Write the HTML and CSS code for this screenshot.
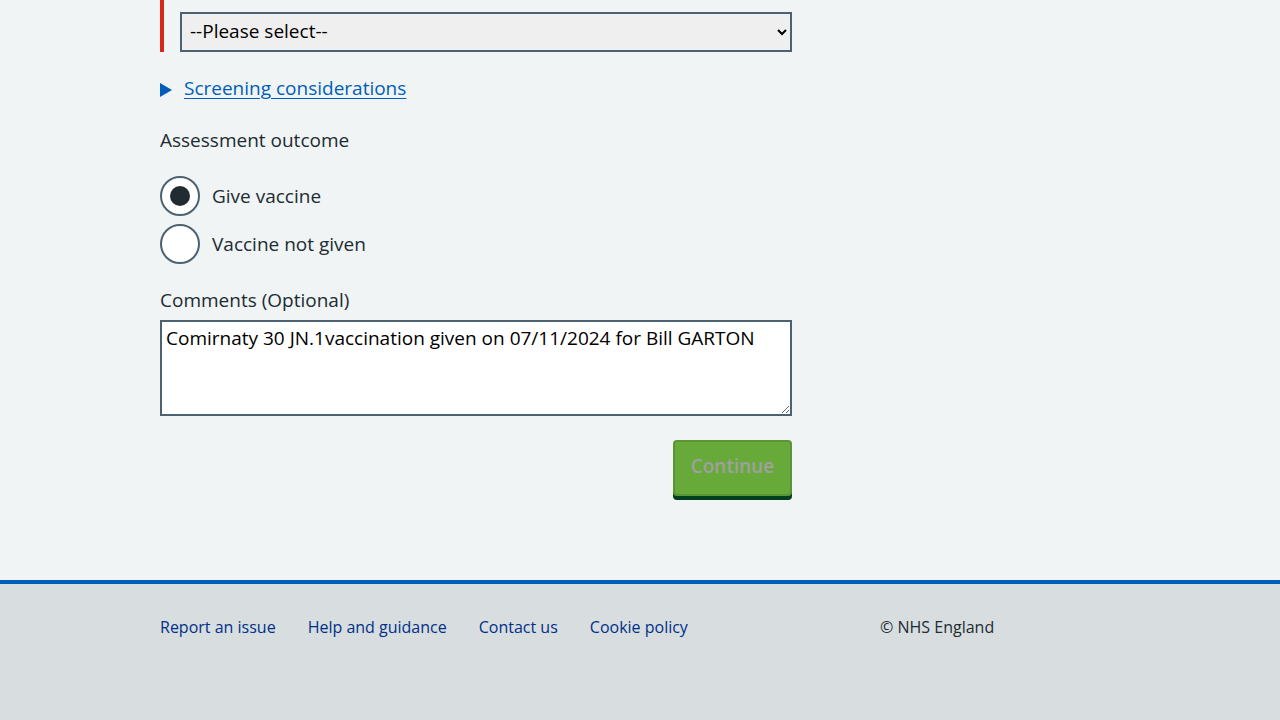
FILE: index.html
```html
<!DOCTYPE html>
<html lang="en">
<head>
<meta charset="utf-8">
<title>Assessment</title>
<link rel="stylesheet" href="styles.css">
</head>
<body>
<main class="main">
  <div class="container">
    <div class="error-group">
      <select class="select">
        <option>--Please select--</option>
      </select>
    </div>

    <div class="details">
      <span class="details-arrow"></span>
      <a href="#" class="details-link">Screening considerations</a>
    </div>

    <fieldset class="fieldset">
      <legend class="legend">Assessment outcome</legend>
      <div class="radios">
        <label class="radio">
          <span class="radio-circle checked"></span>
          <span class="radio-label">Give vaccine</span>
        </label>
        <label class="radio">
          <span class="radio-circle"></span>
          <span class="radio-label">Vaccine not given</span>
        </label>
      </div>
    </fieldset>

    <div class="form-group">
      <label class="label">Comments (Optional)</label>
      <textarea class="textarea">Comirnaty 30 JN.1vaccination given on 07/11/2024 for Bill GARTON</textarea>
    </div>

    <div class="actions">
      <button class="button" type="button">Continue</button>
    </div>
  </div>
</main>
<footer class="footer">
  <div class="footer-inner">
    <ul class="footer-list">
      <li><a href="#" class="footer-link">Report an issue</a></li>
      <li><a href="#" class="footer-link">Help and guidance</a></li>
      <li><a href="#" class="footer-link">Contact us</a></li>
      <li><a href="#" class="footer-link">Cookie policy</a></li>
    </ul>
    <p class="copyright">© NHS England</p>
  </div>
</footer>
</body>
</html>
```
FILE: styles.css
```css
* { box-sizing: border-box; }
html, body {
  margin: 0;
  padding: 0;
  background: #f0f4f5;
  font-family: "Open Sans", "Noto Sans", sans-serif;
  color: #212b32;
}
.main {
  height: 580px;
}
.container {
  width: 632px;
  margin-left: 160px;
}
.error-group {
  border-left: 4px solid #d5281b;
  padding-left: 16px;
  padding-top: 12px;
  height: 52px;
}
.select {
  display: block;
  width: 612px;
  height: 40px;
  border: 2px solid #4c6272;
  background: #efefef;
  font-family: inherit;
  font-size: 19px;
  line-height: 24px;
  color: #000;
  padding: 0 4px 3px;
  margin: 0;
  border-radius: 0;
}
.details {
  display: flex;
  align-items: center;
  margin-top: 24px;
  height: 24px;
}
.details-arrow {
  width: 0;
  height: 0;
  border-left: 12px solid #005eb8;
  border-top: 7px solid transparent;
  border-bottom: 7px solid transparent;
  margin-right: 12px;
  margin-top: 4px;
}
.details-link {
  color: #005eb8;
  font-size: 19px;
  text-decoration: underline;
  text-underline-offset: 3px;
}
.fieldset {
  border: 0;
  margin: 28px 0 0;
  padding: 0;
}
.legend {
  padding: 0;
  font-size: 19px;
  line-height: 24px;
  margin-bottom: 24px;
}
.radios {
  display: flex;
  flex-direction: column;
  gap: 8px;
}
.radio {
  display: flex;
  align-items: center;
  height: 40px;
}
.radio-circle {
  width: 40px;
  height: 40px;
  border: 2px solid #4c6272;
  border-radius: 50%;
  background: #fff;
  display: flex;
  align-items: center;
  justify-content: center;
  flex-shrink: 0;
}
.radio-circle.checked::after {
  content: "";
  width: 20px;
  height: 20px;
  border-radius: 50%;
  background: #212b32;
}
.radio-label {
  font-size: 19px;
  margin-left: 12px;
}
.form-group {
  margin-top: 24px;
}
.label {
  display: block;
  font-size: 19px;
  line-height: 24px;
  margin-bottom: 8px;
}
.textarea {
  display: block;
  width: 632px;
  height: 96px;
  border: 2px solid #4c6272;
  background: #fff;
  font-family: inherit;
  font-size: 19px;
  line-height: 24px;
  color: #000;
  padding: 4px 4px;
  margin: 0;
  resize: vertical;
}
.actions {
  display: flex;
  justify-content: flex-end;
  margin-top: 24px;
}
.button {
  background: #67aa3a;
  border: 2px solid #5a9436;
  border-radius: 4px;
  box-shadow: 0 4px 0 #00401e;
  color: #a0a0a0;
  font-family: inherit;
  font-weight: 600;
  font-size: 19px;
  line-height: 24px;
  height: 56px;
  width: 119px;
  padding: 0 0 4px;
}
.footer {
  background: #d8dde0;
  border-top: 4px solid #005eb8;
  height: 140px;
}
.footer-inner {
  width: 960px;
  margin-left: 160px;
  display: flex;
  padding-top: 32px;
}
.footer-list {
  list-style: none;
  margin: 0;
  padding: 0;
  width: 720px;
  display: flex;
  gap: 32px;
}
.footer-link {
  color: #003087;
  text-decoration: none;
  font-size: 16px;
  line-height: 22px;
}
.copyright {
  margin: 0;
  font-size: 16px;
  line-height: 22px;
  color: #212b32;
}
```
